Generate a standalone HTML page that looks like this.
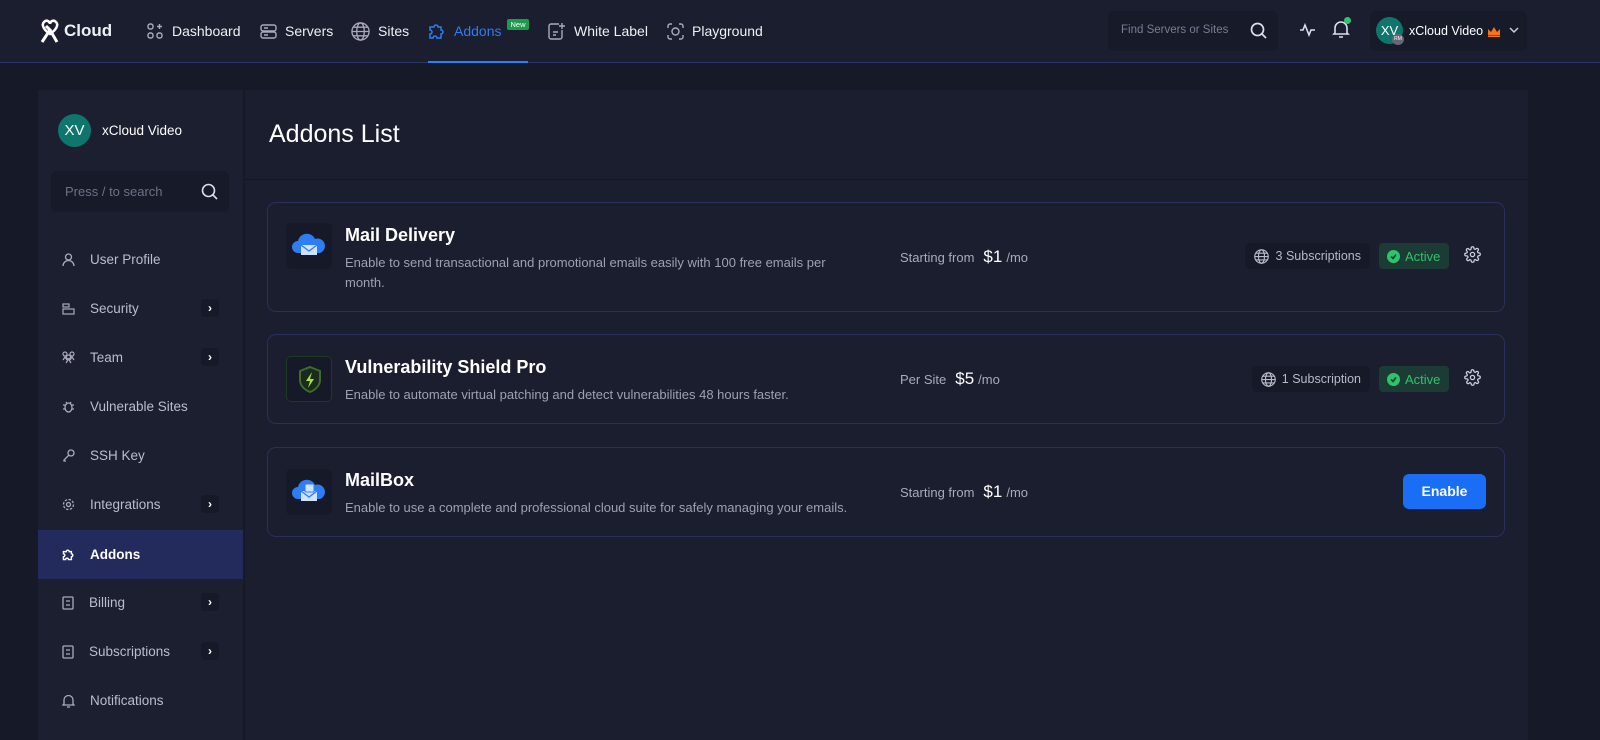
<!DOCTYPE html>
<html><head><meta charset="utf-8"><style>
*{box-sizing:border-box;margin:0;padding:0}
body{width:1600px;height:740px;overflow:hidden;background:#151928;font-family:"Liberation Sans",sans-serif;color:#e8eaf0;position:relative}
.hdr{position:absolute;left:0;top:0;width:1600px;height:63px;background:#1a1e2e;border-bottom:1px solid #2b3266}
.nav{position:absolute;top:0;height:62px;display:flex;align-items:center;font-size:14px;color:#eef0f5}
.nav svg{margin-right:8px}
.side{position:absolute;left:38px;top:90px;width:205px;height:650px;background:#1b1f30}
.cont{position:absolute;left:245px;top:90px;width:1283px;height:650px;background:#1a1e2e}
.mi{position:absolute;left:0;width:205px;height:49px;display:flex;align-items:center;padding-left:24px;font-size:13.5px;color:#b9bdcc}
.mi svg{margin-right:15px}
.chev{position:absolute;right:24px;top:15px;width:18px;height:18px;background:#151928;border-radius:4px;color:#fff;font-size:12px;text-align:center;line-height:18px;font-weight:bold}
.card{position:absolute;left:22px;width:1238px;border:1px solid #2a2f5c;border-radius:9px}
.ic{position:absolute;left:18px;width:46px;height:46px;background:#151928;border-radius:5px}
.tt{position:absolute;left:77px;font-size:18px;font-weight:bold;color:#fff}
.ds{position:absolute;left:77px;font-size:13px;color:#9ca1b3;line-height:20px;width:520px}
.pr{position:absolute;left:632px;font-size:13px;color:#a7abbb;display:flex;align-items:baseline}
.pr b{font-size:17px;color:#fff;font-weight:normal;margin:0 4px 0 9px}
.sub{position:absolute;right:134px;height:26px;background:#151928;border-radius:5px;font-size:12.5px;color:#b5b9c8;display:flex;align-items:center;padding:0 9px;white-space:nowrap}
.act{position:absolute;height:26px;width:70px;background:#1c3b35;border-radius:4px;font-size:13px;color:#2fc36b;display:flex;align-items:center;padding-left:8px}
.gear{position:absolute;left:1196px}
</style></head><body>
<div class="hdr"></div>
<div class="nav" style="left:38px"><svg width="24" height="26" viewBox="0 0 24 26"><path d="M6 4c3-3 6 0 6 2 0-2 3-5 6-2 3 3 0 8-6 12C6 12 3 7 6 4z" fill="none" stroke="#fff" stroke-width="2.5"/><path d="M4 24 12 12l-4-4M12 12l7 12" stroke="#fff" stroke-width="3" fill="none"/></svg><span style="font-size:17px;font-weight:bold;margin-left:-6px">Cloud</span></div>
<div class="nav" style="left:147px"><svg width="17" height="17" viewBox="0 0 17 17" fill="none" stroke="#aab" stroke-width="1.4"><rect x="1" y="1" width="5" height="5" rx="2"/><rect x="1" y="10" width="5" height="5" rx="2"/><rect x="10" y="10" width="5" height="5" rx="2"/><path d="M12.5 1v5M10 3.5h5"/></svg>Dashboard</div>
<div class="nav" style="left:260px"><svg width="17" height="17" viewBox="0 0 17 17" fill="none" stroke="#aab" stroke-width="1.4"><rect x="1" y="2" width="15" height="6" rx="2"/><rect x="1" y="9" width="15" height="6" rx="2"/><path d="M4 5h4M4 12h4"/></svg>Servers</div>
<div class="nav" style="left:351px"><svg width="19" height="19" viewBox="0 0 20 20" fill="none" stroke="#aab" stroke-width="1.4"><circle cx="10" cy="10" r="9"/><ellipse cx="10" cy="10" rx="4" ry="9"/><path d="M1 10h18M2.5 5.5h15M2.5 14.5h15"/></svg>Sites</div>
<div class="nav" style="left:428px;color:#2e7cf6"><svg width="18" height="18" viewBox="0 0 18 18" fill="none" stroke="#2e7cf6" stroke-width="1.5"><path d="M2 5h4a2 2 0 1 1 4 0h3v3a2 2 0 1 1 0 4v4H9a2 2 0 1 0-4 0H2v-4a2 2 0 1 0 0-4z"/></svg>Addons<span style="background:#1e9a4e;color:#fff;font-size:7.5px;padding:1px 3px;border-radius:2px;margin-left:6px;margin-top:-14px">New</span></div>
<div style="position:absolute;left:428px;top:61px;width:100px;height:2px;background:#2e7cf6"></div>
<div class="nav" style="left:548px"><svg width="18" height="19" viewBox="0 0 18 19" fill="none" stroke="#aab" stroke-width="1.4"><path d="M11 2H3a2 2 0 0 0-2 2v11a2 2 0 0 0 2 2h9a2 2 0 0 0 2-2V8M5 10h5M5 13h3M14 1v6M11 4h6"/></svg>White Label</div>
<div class="nav" style="left:667px"><svg width="17" height="17" viewBox="0 0 17 17" fill="none" stroke="#aab" stroke-width="1.4"><path d="M1 5V3a2 2 0 0 1 2-2h2M12 1h2a2 2 0 0 1 2 2v2M16 12v2a2 2 0 0 1-2 2h-2M5 16H3a2 2 0 0 1-2-2v-2"/><circle cx="8.5" cy="8.5" r="3.5"/></svg>Playground</div>
<div style="position:absolute;left:1108px;top:11px;width:170px;height:40px;background:#161a29;border-radius:6px;font-size:11.5px;color:#777d92;padding:13px 0 0 13px">Find Servers or Sites<svg style="position:absolute;right:11px;top:11px" width="17" height="17" viewBox="0 0 17 17" fill="none" stroke="#dde" stroke-width="1.7"><circle cx="7.5" cy="7.5" r="6"/><path d="M12 12l4 4"/></svg></div>
<svg style="position:absolute;left:1299px;top:22px" width="18" height="16" viewBox="0 0 18 16" fill="none" stroke="#dde" stroke-width="1.6"><path d="M1 8h3l2-5 4 10 2-5h4"/></svg>
<svg style="position:absolute;left:1332px;top:19px" width="18" height="20" viewBox="0 0 18 20" fill="none" stroke="#dde" stroke-width="1.6"><path d="M3 14V9a6 6 0 0 1 12 0v5l1 1H2zM7 18h4"/></svg>
<div style="position:absolute;left:1344px;top:17px;width:7px;height:7px;border-radius:50%;background:#2fc36b"></div>
<div style="position:absolute;left:1370px;top:11px;width:157px;height:40px;background:#161a29;border-radius:6px"></div>
<div style="position:absolute;left:1376px;top:17px;width:27px;height:27px;border-radius:50%;background:#0f766e;font-size:13px;color:#fff;text-align:center;line-height:27px">XV</div>
<div style="position:absolute;left:1392px;top:34px;width:12px;height:11px;border-radius:50%;background:#667;font-size:5px;color:#fff;text-align:center;line-height:11px">RM</div>
<div style="position:absolute;left:1409px;top:24px;font-size:12.5px;color:#fff">xCloud Video</div>
<svg style="position:absolute;left:1487px;top:26px" width="14" height="11" viewBox="0 0 14 11"><path d="M1 3l3 3 3-5 3 5 3-3v6H1z" fill="#f97316"/><rect x="1" y="9.5" width="12" height="1.5" fill="#f97316"/></svg>
<svg style="position:absolute;left:1509px;top:27px" width="10" height="7" viewBox="0 0 10 7" fill="none" stroke="#ccd" stroke-width="1.5"><path d="M1 1l4 4 4-4"/></svg>

<div class="side">
<div style="position:absolute;left:20px;top:24px;width:33px;height:33px;border-radius:50%;background:#0f766e;color:#fff;font-size:15px;text-align:center;line-height:33px">XV</div>
<div style="position:absolute;left:64px;top:33px;font-size:13.5px;color:#fff">xCloud Video</div>
<div style="position:absolute;left:13px;top:81px;width:178px;height:41px;background:#161a29;border-radius:5px;font-size:13px;color:#6c7287;padding:13px 0 0 14px">Press / to search<svg style="position:absolute;right:11px;top:12px" width="17" height="17" viewBox="0 0 17 17" fill="none" stroke="#dde" stroke-width="1.6"><circle cx="7.5" cy="7.5" r="6"/><path d="M12 12l4 4"/></svg></div>
<div class="mi" style="top:145px"><svg width="13" height="14" viewBox="0 0 13 14" fill="none" stroke="#aab" stroke-width="1.3"><circle cx="6.5" cy="4" r="3"/><path d="M1 13a5.5 5.5 0 0 1 11 0"/></svg>User Profile</div>
<div class="mi" style="top:194px"><svg width="13" height="12" viewBox="0 0 13 12" fill="none" stroke="#aab" stroke-width="1.2"><rect x="1" y="1" width="6" height="3"/><rect x="1" y="6" width="11" height="5"/></svg>Security<span class="chev">›</span></div>
<div class="mi" style="top:243px"><svg width="13" height="13" viewBox="0 0 13 13" fill="none" stroke="#aab" stroke-width="1.2"><circle cx="3" cy="3" r="2"/><circle cx="10" cy="3" r="2"/><circle cx="6.5" cy="6" r="2"/><path d="M1 9l2-3 2 3M8 9l2-3 2 3M4 12l2.5-4 2.5 4"/></svg>Team<span class="chev">›</span></div>
<div class="mi" style="top:292px"><svg width="13" height="13" viewBox="0 0 13 13" fill="none" stroke="#aab" stroke-width="1.3"><ellipse cx="6.5" cy="7.5" rx="3.5" ry="4.5"/><path d="M1 5h2M10 5h2M1 9h2M10 9h2M4 2l1 1.5M9 2 8 3.5"/></svg>Vulnerable Sites</div>
<div class="mi" style="top:341px"><svg width="13" height="13" viewBox="0 0 13 13" fill="none" stroke="#aab" stroke-width="1.3"><circle cx="9" cy="4" r="3"/><path d="M7 6l-5 5v1h2"/></svg>SSH Key</div>
<div class="mi" style="top:390px"><svg width="13" height="13" viewBox="0 0 13 13" fill="none" stroke="#aab" stroke-width="1.3"><circle cx="6.5" cy="6.5" r="2"/><circle cx="6.5" cy="6.5" r="5" stroke-dasharray="2.5 1.4"/></svg>Integrations<span class="chev">›</span></div>
<div class="mi" style="top:440px;background:#232a5c;color:#fff;font-weight:bold"><svg width="13" height="13" viewBox="0 0 18 18" fill="none" stroke="#fff" stroke-width="2"><path d="M2 5h4a2 2 0 1 1 4 0h3v3a2 2 0 1 1 0 4v4H9a2 2 0 1 0-4 0H2v-4a2 2 0 1 0 0-4z"/></svg>Addons</div>
<div class="mi" style="top:488px"><svg width="12" height="14" viewBox="0 0 12 14" fill="none" stroke="#aab" stroke-width="1.3"><rect x="1" y="1" width="10" height="12" rx="1"/><path d="M4 5h4M4 9h4"/></svg>Billing<span class="chev">›</span></div>
<div class="mi" style="top:537px"><svg width="12" height="14" viewBox="0 0 12 14" fill="none" stroke="#aab" stroke-width="1.3"><rect x="1" y="1" width="10" height="12" rx="1"/><path d="M4 5h4M4 9h4"/></svg>Subscriptions<span class="chev">›</span></div>
<div class="mi" style="top:586px"><svg width="13" height="14" viewBox="0 0 13 14" fill="none" stroke="#aab" stroke-width="1.3"><path d="M2 10V6a4.5 4.5 0 0 1 9 0v4l1 1H1zM5 13h3"/></svg>Notifications</div>
</div>

<div class="cont">
<div style="position:absolute;left:24px;top:30px;font-size:25px;color:#fff">Addons List</div>
<div style="position:absolute;left:0;top:89px;width:1283px;height:1px;background:#121624"></div>

<div class="card" style="top:112px;height:110px">
<div class="ic" style="top:20px"><svg width="46" height="46" viewBox="0 0 46 46"><path d="M12 30a6 6 0 0 1 0-12 9 9 0 0 1 17-2 7 7 0 0 1 5 14z" fill="#2f7df5"/><path d="M15 22h16v10H15z" fill="#cfe2ff"/><path d="M15 22l8 6 8-6" fill="none" stroke="#2f7df5" stroke-width="1.3"/><circle cx="24" cy="18" r="3" fill="#2f7df5"/></svg></div>
<div class="tt" style="top:22px">Mail Delivery</div>
<div class="ds" style="top:50px">Enable to send transactional and promotional emails easily with 100 free emails per month.</div>
<div class="pr" style="top:44px">Starting from<b>$1</b>/mo</div>
<div class="sub" style="top:40px"><svg width="15" height="15" viewBox="0 0 20 20" fill="none" stroke="#bbc" stroke-width="1.5" style="margin-right:7px"><circle cx="10" cy="10" r="9"/><ellipse cx="10" cy="10" rx="4" ry="9"/><path d="M1 10h18M2.5 5.5h15M2.5 14.5h15"/></svg>3 Subscriptions</div>
<div class="act" style="left:1111px;top:40px"><svg width="13" height="13" viewBox="0 0 13 13" style="margin-right:5px"><circle cx="6.5" cy="6.5" r="6.5" fill="#2fc36b"/><path d="M4 6.5l2 2 3-4" stroke="#1c3b35" stroke-width="1.6" fill="none"/></svg>Active</div>
<svg class="gear" style="top:43px" width="17" height="17" viewBox="0 0 24 24" fill="none" stroke="#ccd" stroke-width="1.8"><circle cx="12" cy="12" r="3"/><path d="M19.4 15a1.6 1.6 0 0 0 .3 1.8l.1.1a2 2 0 1 1-2.8 2.8l-.1-.1a1.6 1.6 0 0 0-2.7 1.1V21a2 2 0 1 1-4 0v-.1a1.6 1.6 0 0 0-2.7-1.1l-.1.1a2 2 0 1 1-2.8-2.8l.1-.1A1.6 1.6 0 0 0 3.6 14H3a2 2 0 1 1 0-4h.1a1.6 1.6 0 0 0 1.1-2.7l-.1-.1a2 2 0 1 1 2.8-2.8l.1.1A1.6 1.6 0 0 0 10 3.6V3a2 2 0 1 1 4 0v.1a1.6 1.6 0 0 0 2.7 1.1l.1-.1a2 2 0 1 1 2.8 2.8l-.1.1a1.6 1.6 0 0 0 1.1 2.7H21a2 2 0 1 1 0 4h-.1a1.6 1.6 0 0 0-1.5 1.3z"/></svg>
</div>

<div class="card" style="top:244px;height:90px">
<div class="ic" style="top:21px;border:1px solid #1f3a24"><svg width="46" height="46" viewBox="0 0 46 46"><path d="M23 10l10 4v9c0 6-5 10-10 12-5-2-10-6-10-12v-9z" fill="#1a2a1e" stroke="#3f6b2b" stroke-width="2"/><path d="M25 15l-6 9h4l-2 7 6-9h-4z" fill="#a3e635"/></svg></div>
<div class="tt" style="top:22px">Vulnerability Shield Pro</div>
<div class="ds" style="top:50px">Enable to automate virtual patching and detect vulnerabilities 48 hours faster.</div>
<div class="pr" style="top:34px">Per Site<b>$5</b>/mo</div>
<div class="sub" style="top:31px"><svg width="15" height="15" viewBox="0 0 20 20" fill="none" stroke="#bbc" stroke-width="1.5" style="margin-right:6px"><circle cx="10" cy="10" r="9"/><ellipse cx="10" cy="10" rx="4" ry="9"/><path d="M1 10h18M2.5 5.5h15M2.5 14.5h15"/></svg>1 Subscription</div>
<div class="act" style="left:1111px;top:31px"><svg width="13" height="13" viewBox="0 0 13 13" style="margin-right:5px"><circle cx="6.5" cy="6.5" r="6.5" fill="#2fc36b"/><path d="M4 6.5l2 2 3-4" stroke="#1c3b35" stroke-width="1.6" fill="none"/></svg>Active</div>
<svg class="gear" style="top:34px" width="17" height="17" viewBox="0 0 24 24" fill="none" stroke="#ccd" stroke-width="1.8"><circle cx="12" cy="12" r="3"/><path d="M19.4 15a1.6 1.6 0 0 0 .3 1.8l.1.1a2 2 0 1 1-2.8 2.8l-.1-.1a1.6 1.6 0 0 0-2.7 1.1V21a2 2 0 1 1-4 0v-.1a1.6 1.6 0 0 0-2.7-1.1l-.1.1a2 2 0 1 1-2.8-2.8l.1-.1A1.6 1.6 0 0 0 3.6 14H3a2 2 0 1 1 0-4h.1a1.6 1.6 0 0 0 1.1-2.7l-.1-.1a2 2 0 1 1 2.8-2.8l.1.1A1.6 1.6 0 0 0 10 3.6V3a2 2 0 1 1 4 0v.1a1.6 1.6 0 0 0 2.7 1.1l.1-.1a2 2 0 1 1 2.8 2.8l-.1.1a1.6 1.6 0 0 0 1.1 2.7H21a2 2 0 1 1 0 4h-.1a1.6 1.6 0 0 0-1.5 1.3z"/></svg>
</div>

<div class="card" style="top:357px;height:90px">
<div class="ic" style="top:21px"><svg width="46" height="46" viewBox="0 0 46 46"><path d="M12 30a6 6 0 0 1 0-12 9 9 0 0 1 17-2 7 7 0 0 1 5 14z" fill="#2f7df5"/><path d="M15 22h16v10H15z" fill="#cfe2ff"/><path d="M15 22l8 6 8-6" fill="none" stroke="#2f7df5" stroke-width="1.3"/><rect x="19" y="15" width="9" height="8" rx="1" fill="#cfe2ff" stroke="#2f7df5"/></svg></div>
<div class="tt" style="top:22px">MailBox</div>
<div class="ds" style="top:50px">Enable to use a complete and professional cloud suite for safely managing your emails.</div>
<div class="pr" style="top:34px">Starting from<b>$1</b>/mo</div>
<div style="position:absolute;left:1135px;top:26px;width:83px;height:35px;background:#1a6ef5;border-radius:6px;color:#fff;font-size:14px;font-weight:bold;text-align:center;line-height:35px">Enable</div>
</div>
</div>
</body></html>
